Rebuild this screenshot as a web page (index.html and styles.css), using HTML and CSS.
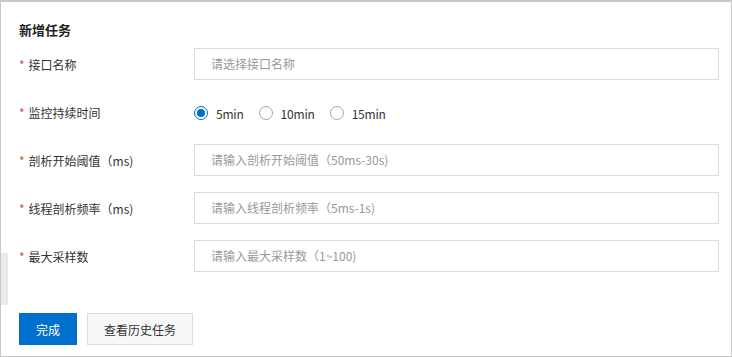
FILE: index.html
```html
<!DOCTYPE html>
<html lang="zh-CN">
<head>
<meta charset="utf-8">
<title>新增任务</title>
<link rel="stylesheet" href="styles.css">
</head>
<body>
<div class="panel">
  <div class="handle"></div>
  <h2 class="title">新增任务</h2>
  <div class="form">
    <div class="row">
      <label class="label"><span class="req">*</span>接口名称</label>
      <div class="input placeholder">请选择接口名称</div>
    </div>
    <div class="row">
      <label class="label"><span class="req">*</span>监控持续时间</label>
      <div class="radios">
        <span class="radio checked"></span><span class="rtext">5min</span>
        <span class="radio"></span><span class="rtext">10min</span>
        <span class="radio"></span><span class="rtext">15min</span>
      </div>
    </div>
    <div class="row">
      <label class="label"><span class="req">*</span>剖析开始阈值（ms)</label>
      <div class="input placeholder">请输入剖析开始阈值（50ms-30s)</div>
    </div>
    <div class="row">
      <label class="label"><span class="req">*</span>线程剖析频率（ms)</label>
      <div class="input placeholder">请输入线程剖析频率（5ms-1s)</div>
    </div>
    <div class="row">
      <label class="label"><span class="req">*</span>最大采样数</label>
      <div class="input placeholder">请输入最大采样数（1~100)</div>
    </div>
  </div>
  <div class="actions">
    <button class="btn primary">完成</button>
    <button class="btn">查看历史任务</button>
  </div>
</div>
</body>
</html>
```

FILE: styles.css
```css
html, body {
  margin: 0;
  padding: 0;
  background: #ffffff;
}
body {
  font-family: "Noto Sans CJK SC", "Noto Sans", sans-serif;
  font-size: 12px;
  color: #333333;
}
.panel {
  position: relative;
  box-sizing: border-box;
  width: 732px;
  height: 357px;
  border: 1px solid #c8c8c8;
  border-top-width: 2px;
  padding: 18px 12px 0 18px;
  background: #ffffff;
}
.handle {
  position: absolute;
  left: 0;
  top: 251px;
  width: 7px;
  height: 52px;
  background: #ebebeb;
}
.title {
  margin: 0 0 8px 0;
  font-size: 13px;
  font-weight: bold;
  line-height: 20px;
  color: #222222;
}
.form {
  display: flex;
  flex-direction: column;
  gap: 16px;
}
.row {
  display: flex;
  align-items: center;
  height: 32px;
}
.label {
  width: 175px;
  flex: none;
  line-height: 20px;
  padding-top: 2px;
  color: #333333;
}
.req {
  color: #d9534f;
  margin-right: 4px;
}
.input {
  flex: 1;
  box-sizing: border-box;
  height: 32px;
  border: 1px solid #dcdcdc;
  padding: 0 16px;
  display: flex;
  align-items: center;
  line-height: 20px;
}
.placeholder {
  color: #999999;
}
.radios {
  display: flex;
  align-items: center;
  padding-top: 2px;
}
.radio {
  box-sizing: border-box;
  width: 14px;
  height: 14px;
  border-radius: 50%;
  border: 1px solid #a8a8a8;
  margin-right: 8px;
  position: relative;
}
.radio.checked {
  border: 1px solid #0070cc;
}
.radio.checked::after {
  content: "";
  position: absolute;
  left: 2px;
  top: 2px;
  width: 8px;
  height: 8px;
  border-radius: 50%;
  background: #0070cc;
}
.rtext {
  margin-right: 15px;
  color: #333333;
  letter-spacing: -0.2px;
}
.actions {
  display: flex;
  gap: 10px;
  margin-top: 41px;
}
.btn {
  box-sizing: border-box;
  height: 32px;
  padding: 0 16px;
  border: 1px solid #dcdcdc;
  background: #f7f7f7;
  color: #333333;
  font-family: inherit;
  font-size: 12px;
  cursor: pointer;
}
.btn.primary {
  width: 58px;
  padding: 0;
  border-color: #0070cc;
  background: #0070cc;
  color: #ffffff;
}
```
